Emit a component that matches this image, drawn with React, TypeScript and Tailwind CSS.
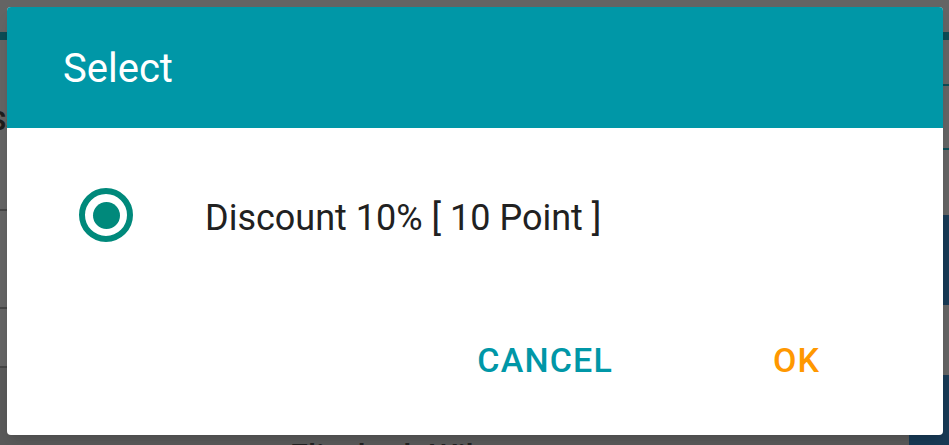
import React from 'react';

const font = { fontFamily: 'Roboto, "Noto Sans", "Liberation Sans", sans-serif' };

const App: React.FC = () => {
  return (
    <div className="relative w-[949px] h-[445px] overflow-hidden bg-[#646464]" style={font}>
      {/* Dimmed page behind the dialog */}
      <div className="flex flex-col h-full">
        <div className="h-[32px] flex items-end justify-between pl-[310px] pr-[48px] overflow-hidden">
          <span className="text-[32px] leading-none text-[#2e2e2e] mb-[-2px]">Tax</span>
          <span className="text-[32px] leading-none text-[#2e2e2e] mb-[-2px]">0.00</span>
        </div>
        <div className="h-[8px] bg-[#0c4c55]" />
        <div className="flex flex-1">
          <div className="flex-1 flex flex-col">
            <div className="h-[171px] border-b-2 border-[#454545] flex items-start pt-[68px]">
              <span className="text-[26px] font-bold leading-none text-[#1e1e1e] -ml-[10px]">Ss</span>
            </div>
            <div className="h-[98px] border-b-2 border-[#454545]" />
            <div className="h-[59px] border-b-2 border-[#454545]" />
            <div className="flex-1 bg-[#5a5a5a] flex items-end pl-[290px] overflow-hidden">
              <span className="text-[32px] leading-none font-medium text-[#222] mb-[-26px]">Elizabeth Wilson</span>
            </div>
          </div>
          <div className="w-[40px] flex flex-col">
            <div className="h-[46px] border-b-2 border-[#0c4c55]" />
            <div className="h-[64px] border-b-2 border-[#0c4c55]" />
            <div className="h-[65px]" />
            <div className="h-[90px] bg-[#183a55] flex items-center">
              <span className="text-[30px] text-[#6b7f8f] leading-none">C</span>
            </div>
            <div className="h-[70px]" />
            <div className="flex-1 bg-[#183a55]" />
          </div>
        </div>
      </div>

      {/* Dialog */}
      <div className="absolute left-[7px] top-[7px] w-[936px] h-[428px] rounded-[4px] overflow-hidden bg-white shadow-lg flex flex-col">
        <div className="h-[121px] bg-[#0097a7] flex items-center pl-[56px]">
          <span className="text-[40px] leading-none text-white mt-[2px]">Select</span>
        </div>
        <div className="flex items-center pt-[60px] pl-[72px]">
          <div className="w-[54px] h-[54px] rounded-full border-[6px] border-[#00897b] flex items-center justify-center">
            <div className="w-[27px] h-[27px] rounded-full bg-[#00897b]" />
          </div>
          <span className="ml-[72px] mt-[5px] text-[36px] leading-none text-[#212121]">Discount 10% [ 10 Point ]</span>
        </div>
        <div className="mt-[78px] h-[80px] flex items-center justify-end pr-[123px] gap-[160px]">
          <span className="text-[34px] leading-none font-medium tracking-[1.2px] text-[#0097a7]">CANCEL</span>
          <span className="text-[34px] leading-none font-medium tracking-[1px] text-[#ff9800]">OK</span>
        </div>
      </div>
    </div>
  );
};

export default App;
